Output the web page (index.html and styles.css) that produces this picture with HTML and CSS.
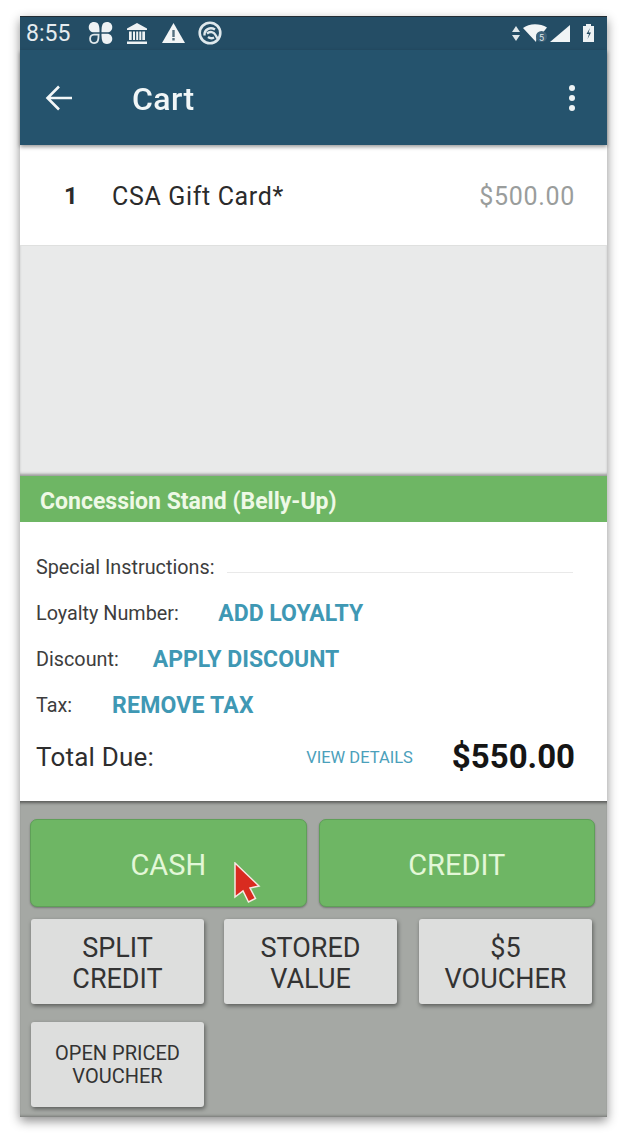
FILE: index.html
```html
<!DOCTYPE html>
<html lang="en">
<head>
<meta charset="utf-8">
<title>Cart</title>
<link rel="stylesheet" href="styles.css">
</head>
<body>
<main class="phone">
  <div class="status">
    <span class="clock">8:55</span>
    <svg class="ic-clover" viewBox="0 0 25 22"><g fill="#eef2f4"><path d="M11.500 10.300H6C-1 10.300-1 0 6 0c5 0 5.500 4 5.500 10.300z"/><path d="M13.500 10.300H19C26 10.300 26 0 19 0c-5 0-5.500 4-5.500 10.300z"/><path d="M13.500 11.700H19C26 11.700 26 22 19 22c-5 0-5.500-4-5.500-10.300z"/></g><path fill="none" stroke="#dfe7ea" stroke-width="1.800" d="M10.600 12.600H6C.8 12.600.8 21.100 6 21.100c4 0 4.600-3 4.600-8.500z"/></svg>
    <svg class="ic-bank" viewBox="0 0 20 21"><path fill="#eef2f4" d="M10 0 20 5.500V7H0V5.500zM0 18.500h20V21H0zM2 8.500h2.700v8.500H2zM6 8.500h2v8.500H6zM9.200 8.500h2v8.500h-2zM12.300 8.500h2v8.500h-2zM15.300 8.500H18v8.500h-2.700z"/></svg>
    <svg class="ic-warn" viewBox="0 0 23 20"><path fill="#f2f5f6" d="M11.500 0 23 20H0z"/><path fill="#54707f" d="M10.300 7h2.400v7h-2.400zM10.300 15h2.400v2.500h-2.400z"/></svg>
    <svg class="ic-sync" viewBox="0 0 24 24"><circle cx="12" cy="12" r="10.300" fill="none" stroke="#dfe8ec" stroke-width="2.600"/><path fill="none" stroke="#dfe8ec" stroke-width="2.400" d="M6.500 14.500C6 8.500 12 5.500 17 8.500M9 12.500c3-2.500 7-1.500 8.500 1.500l2 3.500M10 16c2 1.500 4 1.500 6 .5"/></svg>
    <span class="status-gap"></span>
    <svg class="ic-data" viewBox="0 0 8 15"><path fill="#dfe7ea" d="M4 0 8 6H0zM0 9h8l-4 6z"/></svg>
    <svg class="ic-wifi" viewBox="0 0 24 18"><path fill="#f2f5f6" d="M0 4C6-1 17-1 24 3.500l-4 5-6 1-1 8.500z"/><circle cx="18.500" cy="12.500" r="5.500" fill="#3e6279"/><text class="wifi-mark" x="16" y="16.500">5</text></svg>
    <svg class="ic-signal" viewBox="0 0 20 17"><path fill="#f0f4f5" d="M20 0v17H0z"/></svg>
    <svg class="ic-battery" viewBox="0 0 11 18"><path fill="#eef2f4" d="M3 0h5v2h3v16H0V2h3z"/><path fill="#23485f" d="M7 4 3.500 10H6l-1.500 5L8 8.500H5.500z"/></svg>
  </div>

  <header class="toolbar">
    <svg class="ic-back" viewBox="0 0 28 26"><path fill="none" stroke="#f3f7f8" stroke-width="2.600" d="M27 13H3M14 1.500 2.500 13 14 24.500"/></svg>
    <h1 class="title">Cart</h1>
    <div class="kebab"><i></i><i></i><i></i></div>
  </header>

  <section class="item">
    <span class="qty">1</span>
    <span class="name">CSA Gift Card*</span>
    <span class="price">$500.00</span>
  </section>

  <div class="empty"></div>

  <div class="stand">Concession Stand (Belly-Up)</div>

  <section class="details">
    <div class="row row-special"><span class="label">Special Instructions:</span><span class="line"></span></div>
    <div class="row row-loyalty"><span class="label">Loyalty Number:</span><a class="action">ADD LOYALTY</a></div>
    <div class="row row-discount"><span class="label">Discount:</span><a class="action">APPLY DISCOUNT</a></div>
    <div class="row row-tax"><span class="label">Tax:</span><a class="action">REMOVE TAX</a></div>
    <div class="total">
      <span class="total-label">Total Due:</span>
      <a class="view">VIEW DETAILS</a>
      <strong class="amount">$550.00</strong>
    </div>
  </section>

  <section class="pay">
    <div class="pay-main">
      <button class="btn-green">CASH</button>
      <button class="btn-green">CREDIT</button>
    </div>
    <div class="pay-grid">
      <button class="btn-grey">SPLIT<br>CREDIT</button>
      <button class="btn-grey">STORED<br>VALUE</button>
      <button class="btn-grey">$5<br>VOUCHER</button>
      <button class="btn-grey btn-small">OPEN PRICED<br>VOUCHER</button>
    </div>
  </section>

  <svg class="cursor" viewBox="0 0 28 42"><path fill="#d92b20" stroke="#f6e9e4" stroke-width="1.500" d="M2 1 26 24 17 26 22.500 36.500 15.500 40 10 29 2 35z"/></svg>
</main>
</body>
</html>
```

FILE: styles.css
```css
* { box-sizing: border-box; }

html, body { margin: 0; background: #fff; }

body {
  padding: 16px 19px 0 20px;
  height: 1146px;
  overflow: hidden;
  font-family: Roboto, "Liberation Sans", sans-serif;
}

.phone {
  position: relative;
  width: 587px;
  height: 1101px;
  display: flex;
  flex-direction: column;
  box-shadow: 0 4px 10px rgba(0, 0, 0, .45);
  filter: blur(.4px);
}

.status {
  height: 34px;
  flex: none;
  display: flex;
  align-items: center;
  padding: 0 13px 1px 6px;
  background: #244d65;
  border-top: 1px solid #222c33;
  color: #e6ecef;
}

.clock { font-size: 23px; margin-right: 18px; }

.ic-clover { width: 25px; height: 22px; margin-right: 14px; }
.ic-bank { width: 20px; height: 21px; margin-right: 15px; }
.ic-warn { width: 23px; height: 20px; margin-right: 13px; }
.ic-sync { width: 24px; height: 24px; }
.status-gap { flex: 1; }
.ic-data { width: 8px; height: 15px; margin-right: 3px; }
.ic-wifi { width: 24px; height: 18px; margin-right: 3px; }
.wifi-mark { font-size: 9px; fill: #dfe7ea; }
.ic-signal { width: 20px; height: 17px; margin-right: 13px; }
.ic-battery { width: 11px; height: 18px; }

.toolbar {
  height: 95px;
  flex: none;
  display: flex;
  align-items: center;
  padding: 0 32px 0 25px;
  background: #25536d;
  position: relative;
  z-index: 2;
  box-shadow: 0 2px 4px rgba(0, 0, 0, .4);
}

.ic-back { width: 28px; height: 26px; margin-right: 59px; }

.title {
  margin: 0;
  flex: 1;
  font-size: 32px;
  font-weight: 500;
  letter-spacing: .4px;
  padding-top: 3px;
  color: #f1f6f7;
}

.kebab { display: flex; flex-direction: column; gap: 4px; }
.kebab i { display: block; width: 6px; height: 6px; border-radius: 50%; background: #eef3f5; }

.item {
  height: 101px;
  flex: none;
  display: flex;
  align-items: center;
  padding: 2px 32px 0 44px;
  background: #fff;
  border-bottom: 1px solid #dfe0df;
}

.qty { width: 48px; font-size: 24px; font-weight: 700; color: #2b2b2b; }
.name { flex: 1; font-size: 25px; letter-spacing: .65px; color: #2b2b2b; }
.price { font-size: 25px; letter-spacing: .7px; color: #9a9d9c; }

.empty {
  height: 230px;
  flex: none;
  background: #e9eaea;
  box-shadow: inset 0 -3px 3px -1px rgba(0, 0, 0, .35);
}

.stand {
  height: 46px;
  flex: none;
  display: flex;
  align-items: center;
  padding: 4px 0 0 20px;
  background: #6eb664;
  color: #eef9e6;
  font-size: 23px;
  font-weight: 700;
}

.details {
  height: 279px;
  flex: none;
  padding: 0 32px 0 16px;
  background: #fff;
}

.row { display: flex; align-items: center; height: 46px; }
.row-special { margin-top: 22px; }

.label { font-size: 19.800px; color: #3d3d3d; }
.line { flex: 1; height: 1px; margin: 10px 2px 0 13px; background: #e9e9e9; }

.action { font-size: 23px; font-weight: 700; color: #3f98b4; }
.row-loyalty .action { margin-left: 39.500px; }
.row-discount .action { margin-left: 34px; }
.row-tax .action { margin-left: 40px; letter-spacing: .2px; }

.total {
  display: flex;
  align-items: center;
  height: 46px;
  margin-top: 6px;
}

.total-label { font-size: 26px; letter-spacing: .2px; color: #2e2e2e; }
.view { margin-left: auto; margin-right: 39px; font-size: 16.500px; color: #4ba0bb; }
.amount { font-size: 33px; font-weight: 700; color: #151515; margin-top: -2px; }

.pay {
  flex: 1;
  padding: 18px 12px 0 10px;
  background: #a5a8a4;
  box-shadow: inset 0 4px 3px -2px rgba(0, 0, 0, .45), inset 0 -3px 3px -2px rgba(0, 0, 0, .3);
}

.pay-main { display: flex; gap: 12px; margin-bottom: 12px; }

button { font-family: inherit; border: 0; padding: 0; }

.btn-green {
  flex: 1;
  height: 88px;
  padding-top: 3px;
  border-radius: 7px;
  border: 1px solid #5f9f58;
  background: #6eb664;
  color: #e3f7d8;
  font-size: 29px;
  box-shadow: 0 1px 2px rgba(0, 0, 0, .3);
}

.pay-grid {
  display: grid;
  grid-template-columns: 193px 195px 173px;
  row-gap: 18px;
  margin-left: 1px;
}

.btn-grey {
  width: 173px;
  height: 85px;
  padding-top: 4px;
  border-radius: 3px;
  background: #dddedd;
  color: #333;
  font-size: 27px;
  line-height: 31px;
  box-shadow: 1px 2px 4px rgba(0, 0, 0, .45);
}

.btn-small { font-size: 20px; line-height: 23px; padding-top: 1px; }

.cursor {
  position: absolute;
  left: 213px;
  top: 846px;
  width: 28px;
  height: 42px;
}
```
